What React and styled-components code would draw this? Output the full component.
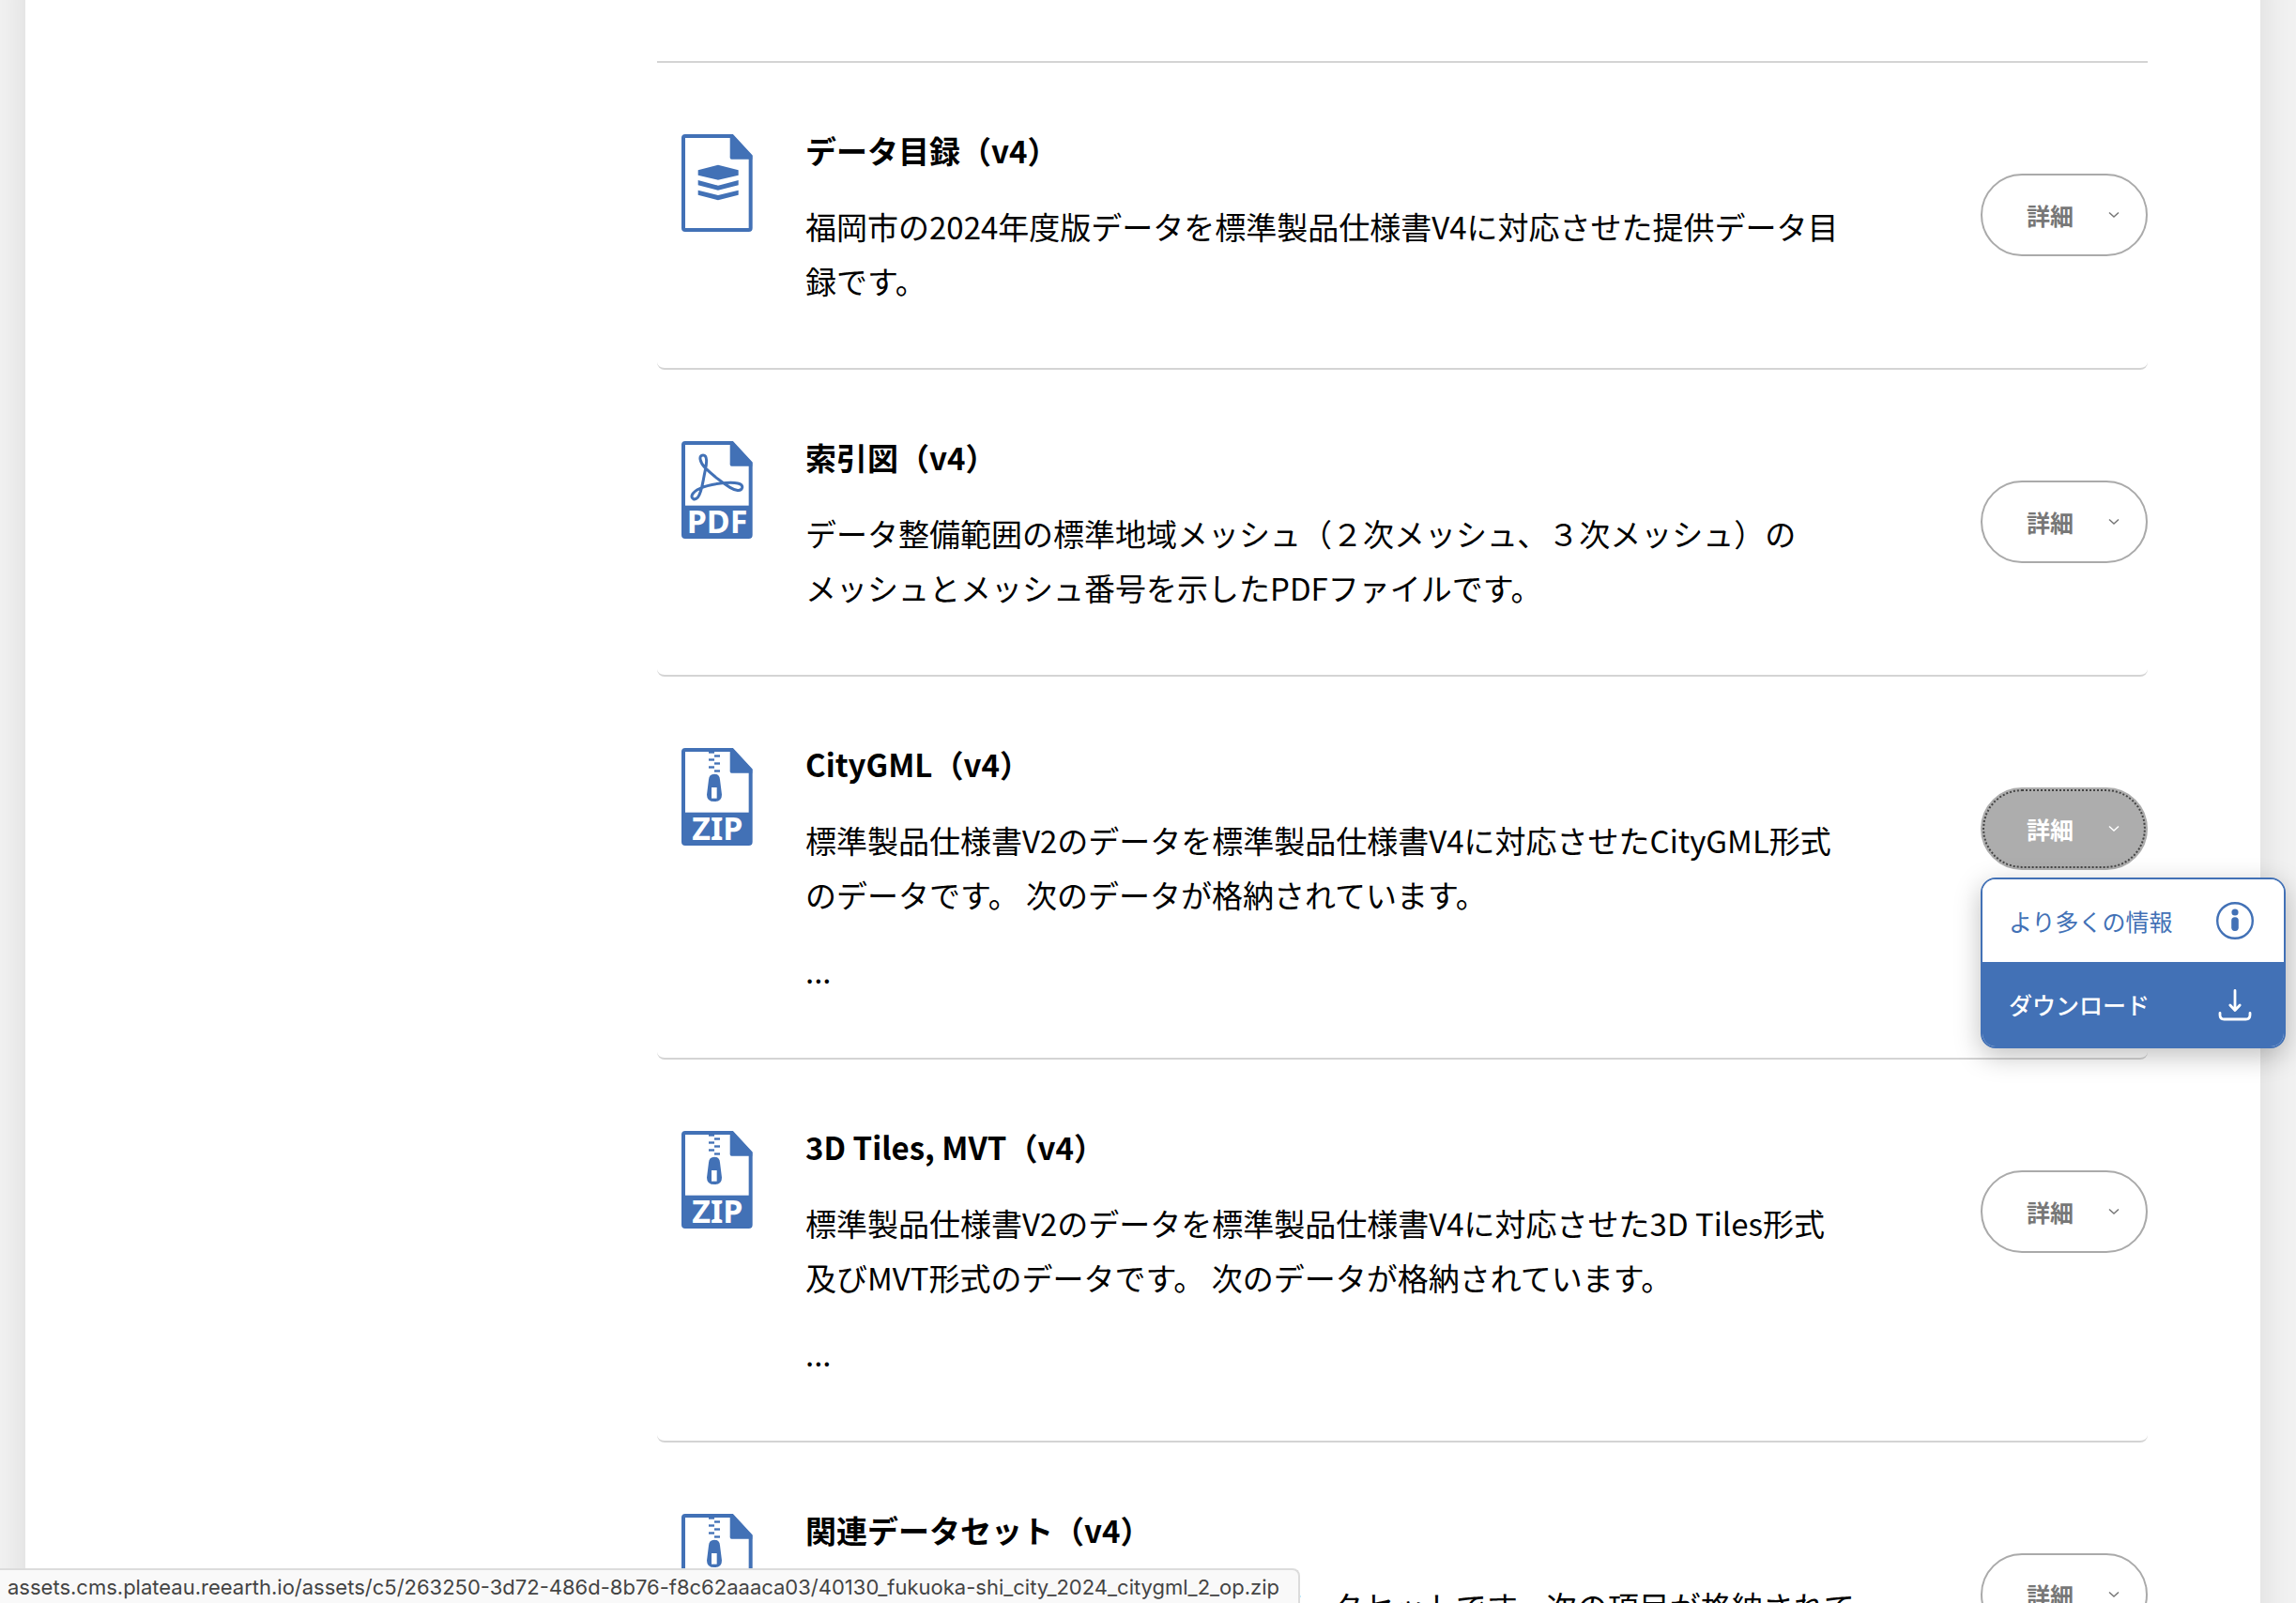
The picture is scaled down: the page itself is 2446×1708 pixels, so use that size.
import { Fragment } from "react";
import styled, { createGlobalStyle, css } from "styled-components";

const blue = "#4271b6";

const GlobalStyle = createGlobalStyle`
* {
box-sizing: border-box;
}
body {
margin: 0;
background: #f2f2f2;
color: #000;
font-family: "Noto Sans CJK JP", sans-serif;
}
`
const Viewport = styled.div`
height: 100vh;
overflow: hidden;
padding: 0 38px 0 27px;
`
const Sheet = styled.main`
min-height: 100%;
margin-top: -40px;
padding: 105px 120px 0 673px;
background: #fff;
box-shadow: 0 0 40px rgba(0, 0, 0, 0.1);
`
const DatasetList = styled.ul`
list-style: none;
margin: 0;
padding: 0;
border-top: 2px solid #d4d4d4;
`
const Row = styled.li`
display: flex;
align-items: flex-start;
padding: 64px 0 64px 26px;
border-bottom: 2px solid #d4d4d4;
border-radius: 8px;
`
const FileSvg = styled.svg`
flex: none;
width: 76px;
height: 104px;
margin: 12px 56px 0 0;
overflow: visible;
`
const IconLabel = styled.text`
font-family: "Noto Sans", sans-serif;
font-size: 102px;
font-weight: 700;
fill: #fff;
text-anchor: middle;
`
const TextColumn = styled.div`
flex: 1;
min-width: 0;
display: flex;
flex-direction: column;
gap: 23px;
`
const Title = styled.h3`
margin: 0;
font-size: 33px;
line-height: 58px;
font-weight: 700;
`
const Description = styled.p`
margin: 0;
font-size: 33px;
line-height: 58px;
`
const Actions = styled.div`
position: relative;
flex: none;
margin: 54px 0 0 124px;
`
const DetailButton = styled.button`
display: flex;
align-items: center;
justify-content: space-between;
width: 178px;
height: 88px;
padding: 0 28px 0 47px;
border: 2px solid #aaa;
border-radius: 44px;
background: #fff;
color: #777;
font-family: inherit;
font-size: 25px;
font-weight: 700;
cursor: pointer;

${({ $open }) => $open && css`
border-color: #adadad;
background: #adadad;
color: #fff;
outline: 2px dotted #444;
outline-offset: -4px;
`}
`
const Menu = styled.div`
position: absolute;
top: 96px;
left: 0;
z-index: 2;
width: 325px;
overflow: hidden;
border: 2px solid ${blue};
border-radius: 16px;
background: #fff;
box-shadow: 0 8px 28px rgba(0, 0, 0, 0.25);
`
const MenuItem = styled.a`
display: flex;
align-items: center;
justify-content: space-between;
height: ${({ $filled }) => ($filled ? "90px" : "88px")};
padding: 0 32px 0 28px;
background: ${({ $filled }) => ($filled ? blue : "#fff")};
color: ${({ $filled }) => ($filled ? "#fff" : blue)};
font-size: 25px;
font-weight: ${({ $filled }) => ($filled ? 500 : 400)};
text-decoration: none;
`
const StatusBar = styled.div`
position: fixed;
left: 0;
bottom: 0;
z-index: 3;
height: 37px;
padding: 0 20px 0 8px;
border: solid #dcdcdc;
border-width: 2px 2px 0 0;
border-radius: 0 8px 0 0;
background: #f9f9f9;
color: #444;
font-family: Inter, sans-serif;
font-size: 22px;
line-height: 37px;
white-space: nowrap;
`

function LayersMark() {
    return (
        <g fill={blue}>
            <path d="M117 98L182 115V131L117 146L53 131V115Z" />
            <path d="M53 147L117 164L182 147V163L117 179L53 163Z" />
            <path d="M53 179L117 195L182 179V194L117 211L53 194Z" />
        </g>
    )
}

function PdfMark() {
    return (
        <>
            <path
                d="M76 86C58 68 54 45 69 45C84 45 81 72 75 98C67 135 65 165 52 180C42 191 30 184 34 172C42 154 75 141 130 134C175 131 197 134 194 149C190 163 172 158 155 148C124 129 98 107 76 86Z"
                fill="none"
                stroke={blue}
                strokeWidth="9"
            />
            <rect x="4" y="206" width="220" height="102" fill={blue} />
            <IconLabel x="114" y="295">PDF</IconLabel>
        </>
    )
}

function ZipMark() {
    return (
        <>
            <g fill={blue}>
                <rect x="87" y="10" width="18" height="7" />
                <rect x="105" y="22" width="18" height="7" />
                <rect x="87" y="34" width="18" height="7" />
                <rect x="105" y="46" width="18" height="7" />
                <rect x="87" y="58" width="18" height="7" />
                <rect x="105" y="70" width="18" height="7" />
                <path d="M87 101Q88 83 105 83Q122 83 123 101L129 149Q129 171 105 171Q81 171 81 149Z" />
                <rect x="4" y="206" width="220" height="102" />
            </g>
            <rect x="96" y="126" width="17" height="35" fill="#fff" />
            <IconLabel x="115" y="295">ZIP</IconLabel>
        </>
    )
}

const marks = { layers: LayersMark, pdf: PdfMark, zip: ZipMark };

function FileIcon({ type }) {
    const Mark = marks[type];
    return (
        <FileSvg viewBox="0 0 228 312" aria-hidden="true">
            <path
                d="M12 6H162L221 70V300Q221 306 215 306H12Q6 306 6 300V12Q6 6 12 6Z"
                fill="#fff"
                stroke={blue}
                strokeWidth="12"
            />
            <path d="M155 4H165L226 69V80H160Q155 80 155 75Z" fill={blue} />
            <Mark />
        </FileSvg>
    )
}

function Chevron() {
    return (
        <svg width="12" height="8" viewBox="0 0 12 8" fill="none" stroke="currentColor" strokeWidth="1.5" aria-hidden="true">
            <path d="M1 1.5L6 6L11 1.5" />
        </svg>
    )
}

function InfoIcon() {
    return (
        <svg width="40" height="40" viewBox="0 0 40 40" aria-hidden="true">
            <circle cx="20" cy="20" r="18.8" fill="none" stroke="currentColor" strokeWidth="2.4" />
            <circle cx="20" cy="11" r="3.6" fill="currentColor" />
            <rect x="16.2" y="16.3" width="7.6" height="14.6" rx="3.6" fill="currentColor" />
        </svg>
    )
}

function DownloadIcon() {
    return (
        <svg width="40" height="40" viewBox="0 0 40 40" fill="none" stroke="currentColor" strokeWidth="2.8" strokeLinecap="round" strokeLinejoin="round" aria-hidden="true">
            <path d="M20 5.5V26.5M14.8 21L20 26.5L25.2 21" />
            <path d="M4 29.5V31.5Q4 36 8.5 36H31.5Q36 36 36 31.5V29.5" />
        </svg>
    )
}

const datasets = [
    {
        icon: "layers",
        title: "データ目録（v4）",
        paragraphs: [["福岡市の2024年度版データを標準製品仕様書V4に対応させた提供データ目", "録です。"]],
    },
    {
        icon: "pdf",
        title: "索引図（v4）",
        paragraphs: [["データ整備範囲の標準地域メッシュ（２次メッシュ、３次メッシュ）の", "メッシュとメッシュ番号を示したPDFファイルです。"]],
    },
    {
        icon: "zip",
        title: "CityGML（v4）",
        paragraphs: [["標準製品仕様書V2のデータを標準製品仕様書V4に対応させたCityGML形式", "のデータです。 次のデータが格納されています。"], ["..."]],
        open: true,
    },
    {
        icon: "zip",
        title: "3D Tiles, MVT（v4）",
        paragraphs: [["標準製品仕様書V2のデータを標準製品仕様書V4に対応させた3D Tiles形式", "及びMVT形式のデータです。 次のデータが格納されています。"], ["..."]],
    },
    {
        icon: "zip",
        title: "関連データセット（v4）",
        paragraphs: [["福岡市の都市計画などに関連するデータセットです。次の項目が格納されて", "います。"]],
    },
];

function DatasetRow({ icon, title, paragraphs, open }) {
    return (
        <Row>
            <FileIcon type={icon} />
            <TextColumn>
                <Title>{title}</Title>
                {paragraphs.map((lines, i) => (
                    <Description key={i}>
                        {lines.map((line, j) => (
                            <Fragment key={j}>
                                {j > 0 && <br />}
                                {line}
                            </Fragment>
                        ))}
                    </Description>
                ))}
            </TextColumn>
            <Actions>
                <DetailButton type="button" $open={open} aria-expanded={!!open}>
                    詳細
                    <Chevron />
                </DetailButton>
                {open && (
                    <Menu>
                        <MenuItem href="#info">
                            より多くの情報
                            <InfoIcon />
                        </MenuItem>
                        <MenuItem href="#download" $filled>
                            ダウンロード
                            <DownloadIcon />
                        </MenuItem>
                    </Menu>
                )}
            </Actions>
        </Row>
    )
}

function App() {
    return (
        <>
            <GlobalStyle />
            <Viewport>
                <Sheet>
                    <DatasetList>
                        {datasets.map((dataset) => (
                            <DatasetRow key={dataset.title} {...dataset} />
                        ))}
                    </DatasetList>
                </Sheet>
            </Viewport>
            <StatusBar>
                assets.cms.plateau.reearth.io/assets/c5/263250-3d72-486d-8b76-f8c62aaaca03/40130_fukuoka-shi_city_2024_citygml_2_op.zip
            </StatusBar>
        </>
    )
}

export default App
